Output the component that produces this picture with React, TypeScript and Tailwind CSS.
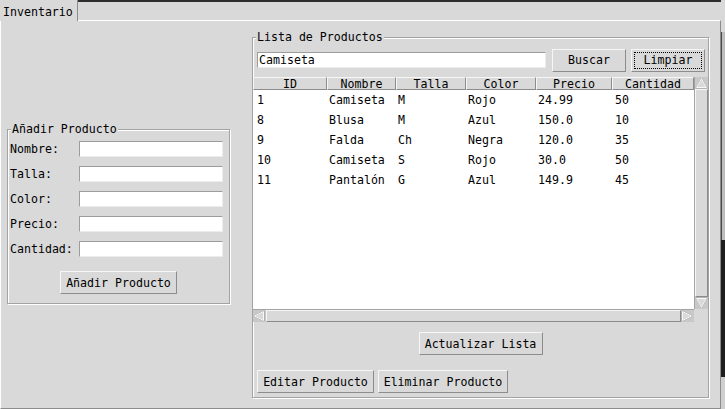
import React from 'react';

const rows = [
  ['1', 'Camiseta', 'M', 'Rojo', '24.99', '50'],
  ['8', 'Blusa', 'M', 'Azul', '150.0', '10'],
  ['9', 'Falda', 'Ch', 'Negra', '120.0', '35'],
  ['10', 'Camiseta', 'S', 'Rojo', '30.0', '50'],
  ['11', 'Pantalón', 'G', 'Azul', '149.9', '45'],
];

const columns = [
  { name: 'ID', w: 'w-[74px]', pad: 'pl-[4px]' },
  { name: 'Nombre', w: 'w-[69px]', pad: 'pl-[2px]' },
  { name: 'Talla', w: 'w-[70px]', pad: 'pl-[2px]' },
  { name: 'Color', w: 'w-[70px]', pad: 'pl-[2px]' },
  { name: 'Precio', w: 'w-[76px]', pad: 'pl-[2px]' },
  { name: 'Cantidad', w: 'w-[82px]', pad: 'pl-[3px]' },
];

const raised = 'border border-t-[#f6f6f6] border-l-[#f6f6f6] border-r-[#8c8c8c] border-b-[#8c8c8c] bg-[#d9d9d9]';

function TkButton({ label, className = '', focus = false }: { label: string; className?: string; focus?: boolean }) {
  return (
    <button
      className={`h-[23px] flex items-center justify-center text-black leading-[14px] ${raised} ${
        focus ? 'outline-1 outline-dotted outline-black outline-offset-[-4px]' : ''
      } ${className}`}
    >
      {label}
    </button>
  );
}

function Entry({ className = '', value = '' }: { className?: string; value?: string }) {
  return (
    <div
      className={`h-[16px] bg-white border border-t-[#9c9c9c] border-l-[#9c9c9c] border-r-[#ececec] border-b-[#ececec] flex items-center pl-[1px] leading-[14px] ${className}`}
    >
      {value}
    </div>
  );
}

function Arrow({ dir }: { dir: 'up' | 'down' | 'left' | 'right' }) {
  const pts = {
    up: '6.5,1 1,11 12,11',
    down: '1,1 12,1 6.5,11',
    left: '1,6 11,1 11,11',
    right: '1,1 1,11 11,6',
  }[dir];
  return (
    <svg width="13" height="12" viewBox="0 0 13 12" className="block">
      <polygon points={pts} fill="#d9d9d9" stroke="#9a9a9a" strokeWidth="1" />
      <polygon points={pts} fill="none" stroke="#ffffff" strokeWidth="1" transform="translate(0.6 0.6) scale(0.9)" />
    </svg>
  );
}

function Group({ title, className, children }: { title: string; className: string; children: React.ReactNode }) {
  return (
    <fieldset
      className={`p-0 border border-[#a3a3a3] shadow-[inset_1px_1px_0_#fff,1px_1px_0_#fff] ${className}`}
    >
      <legend className="ml-[3px] px-[1px] leading-[13px] bg-[#d9d9d9]">{title}</legend>
      {children}
    </fieldset>
  );
}

export default function App() {
  const labels = ['Nombre:', 'Talla:', 'Color:', 'Precio:', 'Cantidad:'];

  return (
    <div className="w-[725px] h-[409px] bg-[#d9d9d9] flex overflow-hidden text-black font-['DejaVu_Sans_Mono',monospace] text-[11.6px]">
      <div className="w-[721px] flex flex-col">
        {/* Tab bar */}
        <div className="h-[20px] flex shrink-0">
          <div className="w-[78px] h-[21px] relative z-10 bg-[#d9d9d9] border-r border-[#8c8c8c] pl-[3px] pt-[5px] leading-[14px]">
            Inventario
          </div>
          <div className="flex-1 border-t-2 border-[#2e2e2e]" />
        </div>

        {/* Notebook page */}
        <div className="h-[389px] border-t border-l border-t-white border-l-white border-r border-b border-r-[#8c8c8c] border-b-[#8c8c8c] flex items-start">
          {/* Añadir Producto */}
          <Group title="Añadir Producto" className="ml-[6px] mt-[102px] w-[223px] h-[181px]">
            <div className="pl-[2px] pt-[5px] flex flex-col">
              <div className="grid grid-cols-[69px_144px] gap-y-[9px] items-center">
                {labels.map((l) => (
                  <React.Fragment key={l}>
                    <span className="leading-[14px]">{l}</span>
                    <Entry />
                  </React.Fragment>
                ))}
              </div>
              <div className="flex justify-center mt-[14px] pr-[2px]">
                <TkButton label="Añadir Producto" className="w-[117px]" />
              </div>
            </div>
          </Group>

          {/* Lista de Productos */}
          <Group title="Lista de Productos" className="ml-[22px] mt-[10px] w-[457px] h-[367px]">
            <div className="pt-[5px] flex flex-col">
              <div className="pl-[4px] flex items-center h-[22px]">
                <Entry className="w-[289px]" value="Camiseta" />
                <TkButton label="Buscar" className="w-[74px] h-[22px] ml-[6px]" />
                <TkButton label="Limpiar" className="w-[74px] h-[22px] ml-[5px]" focus />
              </div>

              {/* Treeview */}
              <div className="mt-[6px] flex flex-col">
                <div className="flex h-[232px]">
                  <div className="w-[441px] flex flex-col bg-white">
                    <div className="flex h-[13px] shrink-0">
                      {columns.map((c) => (
                        <div
                          key={c.name}
                          className={`${c.w} ${raised} flex items-center justify-center leading-[12px]`}
                        >
                          {c.name}
                        </div>
                      ))}
                    </div>
                    <div className="flex-1">
                      {rows.map((r) => (
                        <div key={r[0]} className="flex h-[20px] items-center">
                          {r.map((v, i) => (
                            <div key={i} className={`${columns[i].w} ${columns[i].pad} leading-[14px]`}>
                              {v}
                            </div>
                          ))}
                        </div>
                      ))}
                    </div>
                  </div>
                  <div className="w-[14px] flex flex-col bg-[#c8c8c8] border-l border-[#a3a3a3]">
                    <Arrow dir="up" />
                    <div className={`flex-1 ${raised}`} />
                    <Arrow dir="down" />
                  </div>
                </div>
                <div className="flex h-[13px]">
                  <div className="w-[441px] flex bg-[#c8c8c8] border-t border-[#a3a3a3]">
                    <Arrow dir="left" />
                    <div className={`flex-1 ${raised}`} />
                    <Arrow dir="right" />
                  </div>
                  <div className="w-[14px]" />
                </div>
              </div>

              <div className="flex justify-center mt-[10px]">
                <TkButton label="Actualizar Lista" className="w-[124px] h-[22px]" />
              </div>

              <div className="flex pl-[4px] mt-[15px] gap-[4px]">
                <TkButton label="Editar Producto" className="w-[117px]" />
                <TkButton label="Eliminar Producto" className="w-[130px]" />
              </div>
            </div>
          </Group>
        </div>
      </div>

      {/* desktop strip beyond the window */}
      <div className="w-[4px] flex flex-col">
        <div className="h-[32px] bg-[#d9d9d9]" />
        <div className="h-[208px] bg-[#bdbdbd] border-l border-[#4a4a4a]" />
        <div className="h-[137px] bg-[#1e1e1e]" />
        <div className="flex-1 bg-[#cfcfcf]" />
      </div>
    </div>
  );
}
